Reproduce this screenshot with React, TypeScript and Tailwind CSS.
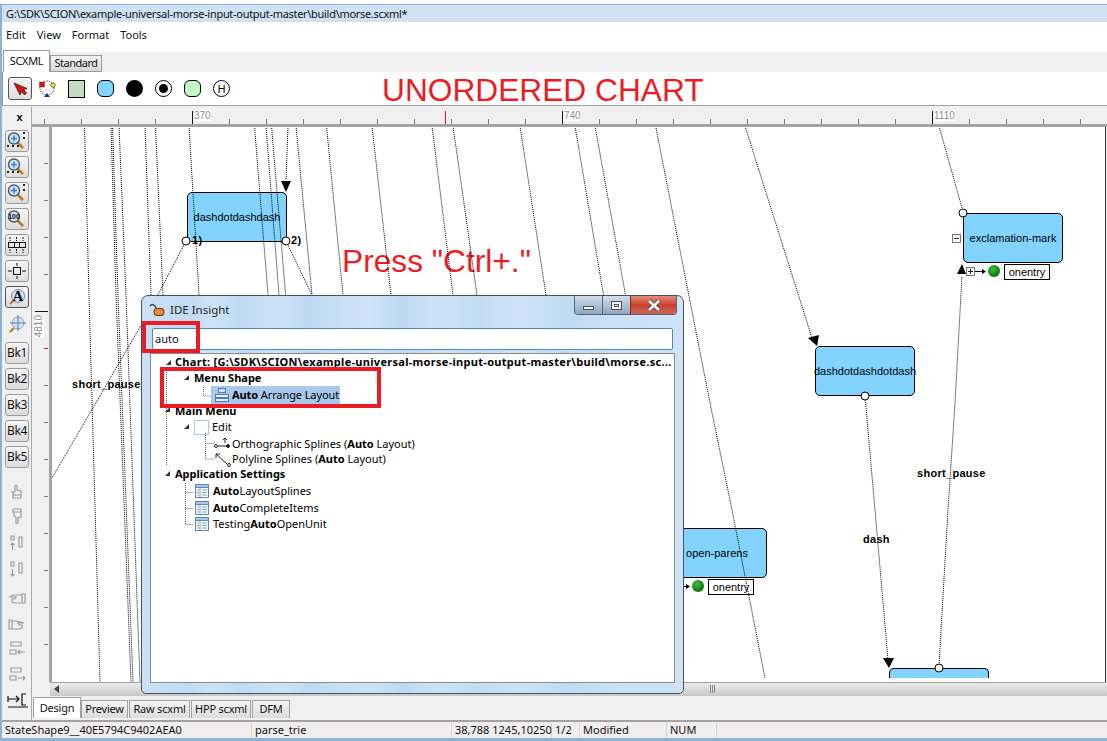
import React from "react";

const ui = "font-['Noto_Sans',sans-serif]";
const arial = "font-['Liberation_Sans',Arial,sans-serif]";

const lines: string[] = [
  "84.5,126 89,295 100,682",
  "111,126 116,295 131,682",
  "112.5,126 118,295 133,682",
  "119,126 126,295 140,682",
  "145,126 151,295",
  "155.5,126 163,295",
  "189,126 199,295",
  "254.5,126 268,295",
  "266,126 279,295",
  "271.5,126 285.6,295",
  "288,126 286,180",
  "296,126 312,295",
  "326.5,126 343,295",
  "372,126 391,295",
  "432,126 453,295",
  "453,126 477,295",
  "520,126 546,295",
  "575,126 603.5,295",
  "595,126 625.5,295",
  "655.6,126 710,403 732,510 765,678",
  "745,126 812,338",
  "939,126 962,208",
  "186,241 150,310 52,478",
  "286,241 312,295",
  "865,396 875,510 888,660",
  "939,665 948,510 955,403 962,276",
];

function Mag({ children, plus = true, label }: { children?: React.ReactNode; plus?: boolean; label?: string }) {
  return (
    <svg width="22" height="20" viewBox="0 0 22 20">
      <line x1="11" y1="11" x2="17" y2="17" stroke="#c07a1e" strokeWidth="2.5" />
      <circle cx="8" cy="7.5" r="5.5" fill="#cfe2f7" stroke="#4a5a6a" strokeWidth="1.4" />
      {plus && <path d="M5 7.5h6M8 4.5v6" stroke="#3d7fd0" strokeWidth="1.6" />}
      {label && (
        <text x="8" y="10" textAnchor="middle" fontSize="7" fontWeight="700" fontFamily="Liberation Sans" fill="#111">
          {label}
        </text>
      )}
      {children}
    </svg>
  );
}

const arrows = (
  <g fill="#222">
    <path d="M1 16h2v-2h-2zM6 16h2v-2H6zM11 16h2v-2h-2zM17 3h2V1h-2zM17 8h2V6h-2z" />
  </g>
);

function TB({ children, pressed }: { children: React.ReactNode; pressed?: boolean }) {
  return (
    <div
      className={
        "ml-[3px] w-[24px] h-[22px] rounded-[3px] border flex items-center justify-center bg-gradient-to-b from-[#f6f6f6] to-[#dcdcdc] " +
        (pressed ? "border-[#555]" : "border-[#9a9a9a]")
      }
    >
      {children}
    </div>
  );
}

function Bk({ n }: { n: number }) {
  return (
    <TB>
      <span className={`${ui} text-[12px] tracking-[-0.3px] text-[#111]`}>Bk{n}</span>
    </TB>
  );
}

function Dis({ d }: { d: string }) {
  return (
    <div className="h-[26px] flex items-center justify-center shrink-0">
      <svg width="20" height="20" viewBox="0 0 20 20" fill="none" stroke="#9c9c9c" strokeWidth="1.2">
        <path d={d} />
      </svg>
    </div>
  );
}

function LeftBar() {
  return (
    <div className="w-[30px] shrink-0 flex flex-col border-r border-[#a8a8a8] bg-[#f0f0f0]">
      <div className={`${arial} h-[23px] pt-[5px] pl-[6px] text-center text-[11px] leading-[11px] font-bold text-black`}>x</div>
      <div className="flex flex-col gap-[4px]">
        <TB><Mag>{arrows}</Mag></TB>
        <TB><Mag><path d="M1 16h2v-2h-2zM6 16h2v-2H6zM11 16h2v-2h-2z" fill="#222" /></Mag></TB>
        <TB><Mag><path d="M17 3h2V1h-2zM17 8h2V6h-2z" fill="#222" /></Mag></TB>
        <TB><Mag plus={false} label="100" /></TB>
        <TB>
          <svg width="20" height="18" viewBox="0 0 20 18" fill="none" stroke="#111">
            <rect x="1.500" y="6.500" width="17" height="5" />
            <path d="M7.500 6.500v5M12.500 6.500v5" />
            <path d="M3 1v4M9.500 1v4M16 1v4M3 13v4M9.500 13v4M16 13v4" strokeDasharray="2 1" />
          </svg>
        </TB>
        <TB>
          <svg width="20" height="18" viewBox="0 0 20 18" fill="none" stroke="#111">
            <rect x="6.500" y="5.500" width="7" height="7" />
            <path d="M10 1v3M10 14v3M1 9h4M15 9h4" />
          </svg>
        </TB>
        <TB pressed>
          <svg width="20" height="18" viewBox="0 0 20 18">
            <line x1="3" y1="16" x2="7" y2="12" stroke="#c07a1e" strokeWidth="2" />
            <circle cx="11" cy="8" r="6.500" fill="#cfe2f7" stroke="#7c8c9c" />
            <text x="11" y="13" textAnchor="middle" fontSize="15" fontWeight="700" fontFamily="Liberation Serif" fill="#111">
              A
            </text>
          </svg>
        </TB>
        <div className="h-[24px] w-[30px] flex items-center justify-center">
          <svg width="20" height="20" viewBox="0 0 20 20" fill="none">
            <line x1="3" y1="18" x2="7" y2="14" stroke="#c07a1e" strokeWidth="2" />
            <circle cx="11" cy="9" r="6" fill="#cfe2f7" stroke="#8ea0b2" />
            <path d="M11 1v16M3 9h16" stroke="#5f7f9f" />
          </svg>
        </div>
      </div>
      <div className="flex flex-col gap-[4px] mt-[6px]">
        <Bk n={1} />
        <Bk n={2} />
        <Bk n={3} />
        <Bk n={4} />
        <Bk n={5} />
      </div>
      <div className="flex flex-col mt-[10px]">
        <Dis d="M8 11V4.500q1-1.500 2 0V9l4 1v4H7l-2-3zM6 14h8v3H6z" />
        <Dis d="M6 2h8v3H6zM7 5h7v5l-3 1v5q-1 1.500-2 0v-6L7 9z" />
        <Dis d="M4 3h3v4H4zM12 4h3v10h-3zM5.500 17v-7M3.500 12l2-2 2 2" />
        <Dis d="M4 3h3v4H4zM12 4h3v10h-3zM5.500 10v7M3.500 15l2 2 2-2" />
        <div className="h-[4px]" />
        <Dis d="M18 5h-3v9h3zM15 6H7L2 8h7l-1 2H5v3l3 1h7" />
        <Dis d="M2 5h3v9H2zM5 6h4l8 2h-6l1 2h3v3l-3 1H5" />
        <div className="-mt-[2px]">
          <Dis d="M4 3h10v4H4zM3 11h6v4H3zM18 13h-7M13 11l-2 2 2 2" />
        </div>
        <Dis d="M4 3h10v4H4zM3 11h6v4H3zM11 13h7M16 11l2 2-2 2" />
        <div className="h-[26px] flex items-center justify-center">
          <svg width="22" height="22" viewBox="0 0 22 22" fill="none" stroke="#111" strokeWidth="1.200">
            <path d="M2 9h11M10 6l3 3-3 3M2 6v6M20 4h-4v11h4M2 17h22" />
          </svg>
        </div>
      </div>
    </div>
  );
}

function TopRuler() {
  const ticks: number[] = [];
  for (let x = 44; x < 1107; x += 37) ticks.push(x);
  const major = (x: number) => x === 192 || x === 562 || x === 932;
  return (
    <div className="h-[20px] relative border-b-[3px] border-[#a3a3a3] overflow-hidden shrink-0 bg-[#f0f0f0]">
      <svg className="absolute left-0 top-0" width="1075" height="17" viewBox="32 107 1075 17">
        {ticks.map((x) => (
          <line key={x} x1={x + 0.5} x2={x + 0.5} y1={major(x) ? 111 : 119} y2="124" stroke={major(x) ? "#111" : "#777"} />
        ))}
        <line x1="445.500" x2="445.500" y1="111" y2="124" stroke="#e01818" />
      </svg>
      {[
        [162, "370"],
        [532, "740"],
        [902, "1110"],
      ].map(([l, t]) => (
        <span key={t as string} style={{ left: l as number }} className={`${arial} absolute top-[3px] text-[10px] leading-[11px] text-[#8c8c8c] bg-white`}>
          {t}
        </span>
      ))}
    </div>
  );
}

function LeftRuler() {
  const ys: number[] = [];
  for (let y = 126; y < 680; y += 37) ys.push(y);
  return (
    <div className="w-[20px] shrink-0 relative border-r-[3px] border-[#a3a3a3] bg-[#f0f0f0]">
      <svg className="absolute left-0 top-0" width="17" height="555" viewBox="32 127 17 555">
        {ys.map((y) => (
          <line key={y} x1={y === 311 ? 35 : 44} x2="48" y1={y + 0.5} y2={y + 0.5} stroke={y === 311 ? "#111" : y === 348 ? "#e01818" : "#777"} />
        ))}
      </svg>
      <span className={`${arial} absolute left-[2px] top-[188px] text-[10px] leading-[10px] text-[#8c8c8c] bg-white [writing-mode:vertical-rl] rotate-180`}>
        4810
      </span>
    </div>
  );
}

function Node({ left, top, w, h, text, clip }: { left: number; top: number; w: number; h: number; text?: string; clip?: boolean }) {
  return (
    <div
      style={{ left, top, width: w, height: h }}
      className={`${arial} absolute bg-[#82d3ff] border border-black text-[11px] text-black flex items-center justify-center whitespace-nowrap ${clip ? "rounded-t-[5px] border-b-0" : "rounded-[5px]"}`}
    >
      {text}
    </div>
  );
}

function Entry({ left, top }: { left: number; top: number }) {
  return (
    <div
      style={{ left, top }}
      className={`${arial} absolute w-[46px] h-[16px] bg-white border border-black text-[11px] leading-[14px] text-black text-center`}
    >
      onentry
    </div>
  );
}

function Label({ left, top, text }: { left: number; top: number; text: string }) {
  return (
    <span style={{ left, top }} className={`${arial} absolute text-[11px] leading-[13px] tracking-[0.3px] font-bold text-black whitespace-nowrap`}>
      {text}
    </span>
  );
}

function Canvas() {
  const X = 52;
  const Y = 127;
  return (
    <div className="flex-1 relative bg-white overflow-hidden mr-[1px] border-r border-[#333]">
      <Node left={187 - X} top={192 - Y} w={100} h={50} text="dashdotdashdash" />
      <Node left={815 - X} top={346 - Y} w={100} h={50} text="dashdotdashdotdash" />
      <Node left={963 - X} top={213 - Y} w={100} h={50} text="exclamation-mark" />
      <Node left={667 - X} top={528 - Y} w={100} h={50} text="open-parens" />
      <Node left={889 - X} top={668 - Y} w={100} h={10} clip />
      <Entry left={708 - X} top={579 - Y} />
      <Entry left={1004 - X} top={264 - Y} />
      <Label left={72 - X} top={378 - Y} text="short_pause" />
      <Label left={917 - X} top={467 - Y} text="short_pause" />
      <Label left={863 - X} top={533 - Y} text="dash" />
      <Label left={192 - X} top={234 - Y} text="1)" />
      <Label left={291 - X} top={234 - Y} text="2)" />
      <span style={{ left: 342 - X, top: 243 - Y }} className={`${arial} absolute text-[31.7px] leading-[36px] text-[#ed1c24] whitespace-nowrap`}>
        Press "Ctrl+."
      </span>
      <svg className="absolute left-0 top-0" width="1055" height="555" viewBox="52 127 1055 555" fill="none">
        {lines.map((p) => (
          <polyline key={p} points={p} stroke="#000" strokeWidth="1" strokeDasharray="1 1" />
        ))}
        <path d="M281 181h10l-5 11z" fill="#000" />
        <path d="M808 338l11-3-2 11z" fill="#000" />
        <path d="M883 658h11l-5 10z" fill="#000" />
        <path d="M957 274l5-10 4 10z" fill="#000" />
        {[[186, 241], [286, 241], [865, 396], [963, 213], [939, 668]].map(([x, y]) => (
          <circle key={x} cx={x} cy={y} r="4" fill="#fff" stroke="#000" />
        ))}
        <rect x="952.500" y="234.500" width="8" height="8" fill="#fff" stroke="#777" />
        <path d="M954 238.500h5" stroke="#222" />
        <rect x="966.500" y="267.500" width="8" height="8" fill="#fff" stroke="#777" />
        <path d="M968 271.500h5M970.500 269v5" stroke="#222" />
        <path d="M975 271.500h9" stroke="#000" />
        <path d="M982 269l4 2.500-4 2.500z" fill="#000" />
        <path d="M684 586.500h4" stroke="#000" />
        <path d="M686 584l4 2.500-4 2.500z" fill="#000" />
        <defs>
          <radialGradient id="gb" cx="0.4" cy="0.35" r="0.7">
            <stop offset="0" stopColor="#3fbf3f" />
            <stop offset="1" stopColor="#046b04" />
          </radialGradient>
        </defs>
        <circle cx="994" cy="271" r="6" fill="url(#gb)" />
        <circle cx="698" cy="586" r="6" fill="url(#gb)" />
      </svg>
    </div>
  );
}

function Row({ h, pl, children }: { h: number; pl: number; children: React.ReactNode }) {
  return (
    <div style={{ height: h, paddingLeft: pl }} className="flex items-center whitespace-nowrap shrink-0 relative">
      {children}
    </div>
  );
}

function ListIcon() {
  return (
    <svg width="16" height="16" viewBox="0 0 16 16" className="shrink-0 mr-[3px]" fill="none">
      <rect x="1.500" y="1.500" width="13" height="13" fill="#fff" stroke="#5c87bd" />
      <rect x="1.500" y="1.500" width="13" height="3" fill="#a9c5e8" stroke="#5c87bd" />
      <path d="M6 5v9M3 7h2M3 9.500h2M3 12h2M8 7h5M8 9.500h5M8 12h5" stroke="#7d9cc4" />
    </svg>
  );
}

function Dialog() {
  const b = "font-bold";
  return (
    <div className={`${ui} absolute left-[141px] top-[295px] w-[543px] h-[399px] rounded-t-[7px] rounded-b-[5px] border border-[#47525e] flex flex-col px-[8px] pb-[10px] bg-[linear-gradient(90deg,#c9e0f7_0%,#c2dbf4_9%,#cfe3f7_13%,#c0daf4_18%,#cde2f7_26%,#bfd9f3_31%,#cfe3f7_42%,#bfd9f3_48%,#cde2f7_55%,#c2dbf4_62%,#cfe3f7_70%,#c0daf4_78%,#cbe1f7_88%,#cfe3f6_100%)]`}>
      <div className="h-[32px] shrink-0 flex justify-between relative">
        <div className="flex items-center gap-[4px] pb-[4px] -ml-[1px]">
          <svg width="16" height="14" viewBox="0 0 16 14" fill="none">
            <path d="M1 3q2-3 5 0l1 2" stroke="#444" strokeWidth="1.500" />
            <rect x="5" y="5.500" width="10" height="7" rx="3" fill="#ef8a2e" stroke="#5a3010" />
          </svg>
          <span className="text-[11.500px] text-[#222] ml-[1px]">IDE Insight</span>
        </div>
        <div className="absolute right-[-2px] top-0 w-[103px] h-[19px] flex rounded-b-[4px] border border-t-0 border-[#59636f] overflow-hidden">
          <div className="w-[28px] flex items-center justify-center bg-gradient-to-b from-[#d2dfec] to-[#8fa6bd] border-r border-[#59636f]">
            <div className="w-[11px] h-[4px] bg-[#f2f2f2] border border-[#46525e] mt-[6px]" />
          </div>
          <div className="w-[27px] flex items-center justify-center bg-gradient-to-b from-[#d2dfec] to-[#8fa6bd]">
            <div className="w-[11px] h-[9px] bg-[#f2f2f2] border border-[#46525e] flex items-center justify-center">
              <div className="w-[5px] h-[3px] border border-[#46525e]" />
            </div>
          </div>
          <div className="flex-1 flex items-center justify-center bg-gradient-to-b from-[#e08a78] via-[#c8402a] to-[#c9675a] border-l border-[#8c2a1c]">
            <svg width="14" height="11" viewBox="0 0 14 11">
              <path d="M2 1l10 9M12 1L2 10" stroke="#3d4a55" strokeWidth="4" />
              <path d="M2 1l10 9M12 1L2 10" stroke="#fff" strokeWidth="2.400" />
            </svg>
          </div>
        </div>
      </div>
      <div className="h-[22px] shrink-0 mx-[2px] bg-white border border-[#4c8abb] rounded-[2px] px-[2px] text-[11px] text-[#111] flex items-center">
        auto
      </div>
      <div className="mt-[3px] flex-1 bg-white border border-[#8b8b8b] relative flex flex-col text-[11px] text-black overflow-hidden">
        <svg className="absolute left-0 top-0" width="523" height="328" viewBox="151 354 523 328" fill="none">
          <path d="M166.500 368v97M203.500 387v9h8M205.500 433v26h9M205.500 443.500h9M185.500 483v41M185.500 492.500h8M185.500 508.500h8M185.500 524.500h8" stroke="#666" strokeDasharray="1 1" />
          {[[169, 363], [187, 378], [168, 410], [187, 427], [168, 474]].map(([x, y]) => (
            <path key={`${x}-${y}`} d="M0 5L5 0v5z" transform={`translate(${x - 3} ${y - 3})`} fill="#333" />
          ))}
        </svg>
        <Row h={17} pl={24}>
          <span className="font-bold tracking-[0.3px] w-[497px]">Chart: [G:\SDK\SCION\example-universal-morse-input-output-master\build\morse.sc...</span>
        </Row>
        <Row h={15} pl={43}>
          <span className={b}>Menu Shape</span>
        </Row>
        <Row h={18} pl={60}>
          <div className="h-[18px] w-[129px] bg-[#a9c9ec] flex items-center pl-[3px] tracking-[-0.1px]">
            <svg width="16" height="15" viewBox="0 0 16 15" className="mr-[2px]" fill="none" stroke="#4f7db3">
              <rect x="4.500" y="0.500" width="7" height="4" fill="#cfe0f4" />
              <rect x="1.500" y="6.500" width="13" height="3" fill="#e7eff9" />
              <rect x="1.500" y="10.500" width="13" height="3" fill="#e7eff9" />
            </svg>
            <span className={b}>Auto</span>
            <span>&nbsp;Arrange Layout</span>
          </div>
        </Row>
        <Row h={14} pl={24}>
          <span className={b}>Main Menu</span>
        </Row>
        <Row h={18} pl={43}>
          <span className="mr-[3px] flex">
            <svg width="15" height="15" viewBox="0 0 15 15" fill="none">
              <rect x="0.500" y="0.500" width="14" height="14" stroke="#4f93d6" strokeDasharray="1 1" />
            </svg>
          </span>
          <span>Edit</span>
        </Row>
        <Row h={16} pl={63}>
          <svg width="18" height="16" viewBox="0 0 18 16" className="shrink-0" fill="none" stroke="#222">
            <path d="M11 2v5M9 4l2-2 2 2M4 10h9" />
            <circle cx="2" cy="10" r="1.500" />
            <circle cx="14" cy="10" r="1.500" fill="#222" />
          </svg>
          <span>Orthographic Splines (</span>
          <span className={b}>Auto</span>
          <span>&nbsp;Layout)</span>
        </Row>
        <Row h={15} pl={63}>
          <svg width="18" height="16" viewBox="0 0 18 16" className="shrink-0" fill="none" stroke="#222">
            <path d="M2 2l11 10M2 6V2h4" />
            <circle cx="15" cy="13" r="1.500" />
          </svg>
          <span>Polyline Splines (</span>
          <span className={b}>Auto</span>
          <span>&nbsp;Layout)</span>
        </Row>
        <Row h={15} pl={24}>
          <span className={b}>Application Settings</span>
        </Row>
        <Row h={18} pl={43}>
          <ListIcon />
          <span className={b}>Auto</span>
          <span>LayoutSplines</span>
        </Row>
        <Row h={16} pl={43}>
          <ListIcon />
          <span className={b}>Auto</span>
          <span>CompleteItems</span>
        </Row>
        <Row h={16} pl={43}>
          <ListIcon />
          <span>Testing</span>
          <span className={b}>Auto</span>
          <span>OpenUnit</span>
        </Row>
      </div>
      <div className="absolute left-[0px] top-[25px] w-[58px] h-[32px] border-[4px] border-[#ed1c24]" />
      <div className="absolute left-[18px] top-[71px] w-[221px] h-[41px] border-[4px] border-[#ed1c24]" />
    </div>
  );
}

function ToolbarIcons() {
  return (
    <div className="flex items-center h-full pl-[5px]">
      <div className="w-[24px] h-[23px] rounded-[3px] border border-[#555] bg-gradient-to-b from-[#f4f4f4] to-[#dedede] flex items-center justify-center">
        <svg width="16" height="16" viewBox="0 0 16 16">
          <path d="M2 2l6 12 1.500-3.500 3 3.500 2-2-3-3.500 3.500-1z" fill="#e01010" stroke="#222" strokeWidth="0.800" />
        </svg>
      </div>
      <svg width="20" height="20" viewBox="0 0 20 20" className="ml-[5px]" fill="none">
        <circle cx="10" cy="9" r="7" stroke="#000" strokeDasharray="1 1.500" />
        <rect x="2.500" y="3" width="5" height="5" fill="#e01010" stroke="#444" strokeWidth="0.500" />
        <circle cx="16" cy="6" r="2.300" fill="#f2e020" stroke="#333" strokeWidth="0.600" />
        <path d="M7 18h6l-3-4z" fill="#1030c0" />
      </svg>
      <div className="ml-[11px] w-[17px] h-[18px] bg-[#c2dcc2] border border-black" />
      <div className="ml-[12px] w-[17px] h-[17px] rounded-[6px] bg-[#82d3ff] border border-black" />
      <div className="ml-[12px] w-[17px] h-[17px] rounded-full bg-black" />
      <div className="ml-[12px] w-[17px] h-[17px] rounded-full bg-white border border-black flex items-center justify-center">
        <div className="w-[9px] h-[9px] rounded-full bg-black" />
      </div>
      <div className="ml-[12px] w-[17px] h-[17px] rounded-[6px] bg-[#c4fcc4] border border-black" />
      <div className={`${ui} ml-[12px] w-[17px] h-[17px] rounded-full bg-white border border-black flex items-center justify-center text-[11px] leading-none text-black`}>
        H
      </div>
    </div>
  );
}

function BottomTab({ w, text, active }: { w: number; text: string; active?: boolean }) {
  return (
    <div
      style={{ width: w }}
      className={`${ui} text-[11px] tracking-[-0.2px] flex items-center justify-center border border-b-0 border-[#a0a0a0] text-[#111] ${active ? "h-[21px] bg-white" : "h-[18px] bg-gradient-to-b from-[#f4f4f4] to-[#dcdcdc]"}`}
    >
      {text}
    </div>
  );
}

function Status() {
  const cols: [number, string][] = [
    [250, "StateShape9__40E5794C9402AEA0"],
    [200, "parse_trie"],
    [100, "38,788 1245,10250"],
    [28, "1/2"],
    [87, "Modified"],
    [50, "NUM"],
  ];
  return (
    <div className="h-[18px] shrink-0 border-t-2 border-[#a3a3a3] pt-[1px] bg-[#f0eeee] flex items-center text-[11px] text-[#111]">
      {cols.map(([w, t]) => (
        <div key={t} style={{ width: w }} className="h-full pl-[3px] border-r border-[#d6d6d6] flex items-center whitespace-nowrap shrink-0">
          {t}
        </div>
      ))}
    </div>
  );
}

export default function App() {
  return (
    <div className={`${ui} relative w-[1107px] h-[741px] overflow-hidden bg-white flex flex-col text-[#111]`}>
      <div className="h-[4px] shrink-0 bg-white" />
      <div className="flex-1 flex flex-col min-h-0 border-t border-l-2 border-b-[3px] border-[#8db2d9] bg-[#f0f0f0]">
        <div className="h-[17px] shrink-0 bg-[#d0e1f4] text-[11px] leading-[17px] pl-[4px] tracking-[-0.3px] whitespace-nowrap">
          {"G:\\SDK\\SCION\\example-universal-morse-input-output-master\\build\\morse.scxml*"}
        </div>
        <div className="h-[30px] shrink-0 bg-white text-[11px] flex items-center gap-[11px] pl-[4px] pb-[3px]">
          <span>Edit</span>
          <span>View</span>
          <span>Format</span>
          <span>Tools</span>
        </div>
        <div className="h-[20px] shrink-0 flex items-end pl-[1px] relative z-10">
          <div className="w-[47px] h-[22px] bg-white border border-b-0 border-[#9a9a9a] text-[11px] tracking-[-0.3px] flex items-center justify-center">SCXML</div>
          <div className="w-[52px] h-[17px] bg-gradient-to-b from-[#f4f4f4] to-[#d8d8d8] border border-[#9a9a9a] text-[11px] tracking-[-0.5px] flex items-center justify-center">Standard</div>
        </div>
        <div className="h-[34px] shrink-0 bg-white border-l border-[#9a9a9a] border-b border-b-[#a0a0a0] relative">
          <ToolbarIcons />
          <span className={`${arial} absolute left-[379px] top-[1px] text-[31.700px] leading-[34px] text-[#ed1c24] whitespace-nowrap`}>UNORDERED CHART</span>
        </div>
        <div className="h-[1px] shrink-0" />
        <div className="flex-1 flex min-h-0">
          <LeftBar />
          <div className="flex-1 flex flex-col min-w-0">
            <TopRuler />
            <div className="flex-1 flex min-h-0">
              <LeftRuler />
              <Canvas />
            </div>
            <div className="h-[14px] shrink-0 flex bg-[#f0f0f0]">
              <div className="w-[18px] shrink-0" />
              <div className="flex-1 relative border-t border-[#a0a0a0] bg-gradient-to-b from-[#ececec] to-[#c8c8c8]">
                <svg className="absolute left-[3px] top-[2px]" width="8" height="9" viewBox="0 0 8 9"><path d="M6 0v8L1 4z" fill="#444" /></svg>
                <svg className="absolute left-[659px] top-[2px]" width="8" height="8" viewBox="0 0 8 8" stroke="#888"><path d="M1.500 0v8M3.500 0v8M5.500 0v8" /></svg>
              </div>
            </div>
            <div className="h-[24px] shrink-0 flex items-start pt-[1px] pl-[1px]">
              <div className="flex items-end h-[21px]">
                <BottomTab w={48} text="Design" active />
                <BottomTab w={47} text="Preview" />
                <div className="w-[1px]" />
                <BottomTab w={61} text="Raw scxml" />
                <div className="w-[1px]" />
                <BottomTab w={60} text="HPP scxml" />
                <div className="w-[1px]" />
                <BottomTab w={38} text="DFM" />
              </div>
            </div>
          </div>
        </div>
        <Status />
      </div>
      <Dialog />
    </div>
  );
}
